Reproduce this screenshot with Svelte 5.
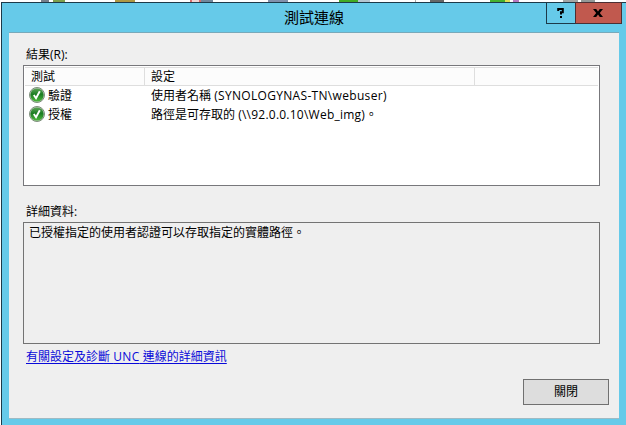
<script>
  const rows = [
    { test: '驗證', pre: '使用者名稱', latin: '(SYNOLOGYNAS-TN\\webuser)', post: '', spacing: 0.32 },
    { test: '授權', pre: '路徑是可存取的', latin: '(\\\\92.0.0.10\\Web_img)', post: '。', spacing: 0.24 }
  ];
  const fragments = [
    { x: 41, w: 8, c: '#777f8c' }, { x: 53, w: 12, c: '#7fa04d' },
    { x: 115, w: 20, c: '#ae9743' }, { x: 190, w: 2, c: '#d66d6d' },
    { x: 192, w: 7, c: '#f2d5d5' }, { x: 199, w: 2, c: '#d66d6d' },
    { x: 201, w: 12, c: '#71879b' }, { x: 268, w: 20, c: '#8290ac' },
    { x: 339, w: 19, c: '#42aa23' }, { x: 358, w: 12, c: '#b5c5d0' },
    { x: 415, w: 1, c: '#aaaaaa' },
    { x: 430, w: 14, c: '#666666' }, { x: 490, w: 15, c: '#45b02e' },
    { x: 505, w: 5, c: '#dfdf53' }, { x: 513, w: 6, c: '#b879c0' },
    { x: 563, w: 15, c: '#a5a5a5' }, { x: 581, w: 14, c: '#939998' }
  ];
</script>

<div class="screen">
  {#each fragments as f}
    <i class="fragment" style="left:{f.x}px;width:{f.w}px;background:{f.c}"></i>
  {/each}
  <div class="window">
    <header>
      <h1>測試連線</h1>
      <div class="controls">
        <button class="help" aria-label="Help">
          <svg width="8" height="10" viewBox="0 0 8 10"><path d="M1.2 3V1H5.8V4.2H4V6.5M4 8V10" fill="none" stroke="#000" stroke-width="2" /></svg>
        </button>
        <button class="close" aria-label="Close">
          <svg width="10" height="8" viewBox="0 0 10 8"><path d="M0 0H3.2L5 2.4 6.8 0H10L6.8 4 10 8H6.8L5 5.6 3.2 8H0L3.2 4Z" /></svg>
        </button>
      </div>
    </header>
    <main>
      <div class="label results">結果(R):</div>
      <div class="list">
        <div class="head"><span class="first">測試</span><span class="second">設定</span></div>
        {#each rows as row}
          <div class="row">
            <svg width="16" height="16" viewBox="0 0 16 16">
              <defs><linearGradient id="green" x1="0" y1="0" x2="0" y2="1"><stop stop-color="#5da556" /><stop offset=".45" stop-color="#1b7c22" /><stop offset="1" stop-color="#4cb93a" /></linearGradient></defs>
              <circle cx="8" cy="8" r="7.5" fill="#b9c8b7" stroke="#7d907b" stroke-width="1" />
              <circle cx="8" cy="8" r="6.6" fill="url(#green)" />
              <path d="M4.8 8 7 11.2 10.8 4.2" fill="none" stroke="#fff" stroke-width="1.9" />
            </svg>
            <span class="test">{row.test}</span>
            <span>{row.pre} <b style="letter-spacing:{row.spacing}px">{row.latin}</b>{row.post}</span>
          </div>
        {/each}
      </div>
      <div class="label details">詳細資料:</div>
      <div class="textbox">已授權指定的使用者認證可以存取指定的實體路徑。</div>
      <div class="link"><a href="#top">有關設定及診斷 <b class="unc">UNC</b> 連線的詳細資訊</a></div>
      <button class="dismiss">關閉</button>
    </main>
  </div>
</div>

<style>
  :global(body) { margin: 0; overflow: hidden; }
  .screen {
    position: relative; box-sizing: border-box; width: 626px; height: 425px;
    padding: 2px 0 0 1px; background: #fff; overflow: hidden;
    font: 12px/18px "Open Sans", "Noto Sans CJK TC", sans-serif; color: #000;
  }
  .fragment { position: absolute; top: 0; height: 2px; }
  .window {
    box-sizing: border-box; height: 423px; border: solid #1c3a49; border-width: 1px 0 0 1px;
    background: #66cae9; padding: 0 7px 0 7px;
  }
  header { position: relative; height: 29px; border-bottom: 1px solid #78a9ba; }
  h1 { margin: 0; padding-top: 2px; text-align: center; font-size: 15px; line-height: 25px; font-weight: 400; }
  .controls { position: absolute; right: -3px; top: -1px; display: flex; }
  button { box-sizing: border-box; display: flex; align-items: center; justify-content: center; padding: 0; font: inherit; color: inherit; }
  .help, .close { height: 22px; border: 1px solid #1c3a49; background: #66cae9; }
  .help { width: 29px; border-right: 0; }
  .close { width: 47px; background: #c1594e; border-color: #4b2f33; padding-right: 2px; }
  main { box-sizing: border-box; height: 386px; padding: 0 19px 0 14px; background: #efefef; border-bottom: 1px solid #9fbac3; }
  .label { padding-left: 3px; }
  .results { padding-top: 13px; height: 19px; }
  .list { box-sizing: border-box; height: 121px; border: 1px solid #77777b; background: #fff; padding: 1px; }
  .head { box-sizing: border-box; display: flex; height: 19px; border: solid #dedede; border-width: 1px 0; background: #fcfcfc; }
  .head span { box-sizing: border-box; border-right: 1px solid #dedede; }
  .first { width: 120px; padding-left: 6px; }
  .second { width: 330px; padding-left: 6px; }
  .row { display: flex; height: 19px; line-height: 19px; }
  .row svg { margin: 1px 3px 0 4px; }
  .test { width: 103px; }
  b { font-weight: 400; }
  .unc { letter-spacing: .4px; }
  .details { padding-top: 17px; height: 19px; }
  .textbox { box-sizing: border-box; height: 122px; border: 1px solid #737373; padding: 1px 5px; }
  .link { padding: 4px 0 0 3px; height: 31px; }
  a { color: #0909d9; text-decoration: underline; text-underline-offset: 2px; }
  .dismiss { width: 86px; height: 26px; margin-left: auto; margin-right: -9px; background: #ddd; border: 1px solid #707070; }
</style>
